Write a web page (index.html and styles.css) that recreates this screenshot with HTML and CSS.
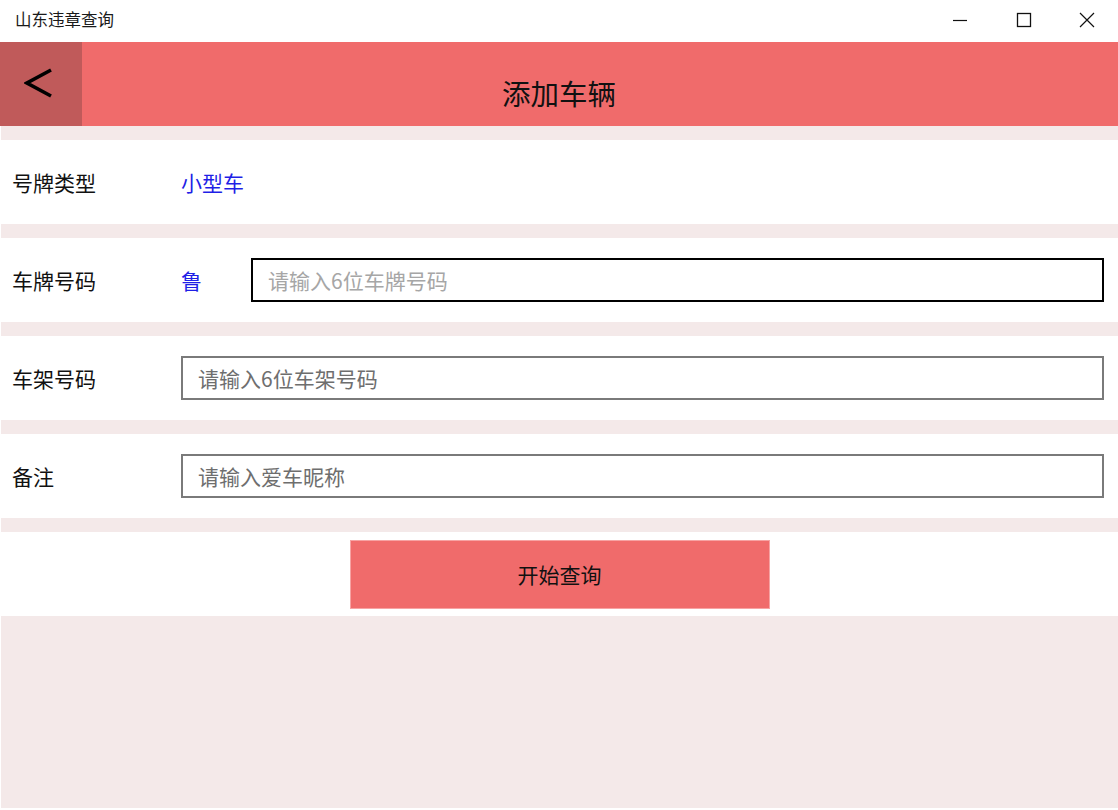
FILE: index.html
```html
<!DOCTYPE html>
<html lang="zh-CN">
<head>
<meta charset="utf-8">
<title>山东违章查询</title>
<link rel="stylesheet" href="styles.css">
</head>
<body>
<div class="window">
  <div class="titlebar">
    <span class="app-title">山东违章查询</span>
    <div class="controls">
      <span class="ctl">
        <svg width="16" height="16" viewBox="0 0 16 16"><line x1="1" y1="8.5" x2="15" y2="8.5" stroke="#111" stroke-width="1.2"/></svg>
      </span>
      <span class="ctl">
        <svg width="16" height="16" viewBox="0 0 16 16"><rect x="1.5" y="1.5" width="13" height="13" fill="none" stroke="#111" stroke-width="1.3"/></svg>
      </span>
      <span class="ctl">
        <svg width="16" height="16" viewBox="0 0 16 16"><path d="M1 1 L15 15 M15 1 L1 15" stroke="#111" stroke-width="1.2" fill="none"/></svg>
      </span>
    </div>
  </div>
  <div class="header">
    <div class="back">
      <svg width="30" height="32" viewBox="0 0 30 32"><polyline points="27,3 3,16 27,29" fill="none" stroke="#000" stroke-width="3.6"/></svg>
    </div>
    <div class="page-title">添加车辆</div>
    <div class="spacer"></div>
  </div>
  <div class="content">
    <div class="row">
      <span class="label">号牌类型</span>
      <span class="value">小型车</span>
    </div>
    <div class="row">
      <span class="label">车牌号码</span>
      <span class="value prov">鲁</span>
      <div class="input focused"><span class="ph">请输入6位车牌号码</span></div>
    </div>
    <div class="row">
      <span class="label">车架号码</span>
      <div class="input"><span class="ph">请输入6位车架号码</span></div>
    </div>
    <div class="row">
      <span class="label">备注</span>
      <div class="input"><span class="ph">请输入爱车昵称</span></div>
    </div>
    <div class="row center">
      <div class="btn">开始查询</div>
    </div>
  </div>
</div>
</body>
</html>
```

FILE: styles.css
```css
html, body {
  margin: 0;
  padding: 0;
  background: #ffffff;
  font-family: "Noto Sans CJK SC", "Noto Sans", sans-serif;
  color: #111;
}

.window {
  width: 1118px;
  height: 810px;
  display: flex;
  flex-direction: column;
  background: #ffffff;
}

.titlebar {
  height: 42px;
  display: flex;
  align-items: center;
  justify-content: space-between;
  background: #ffffff;
}

.app-title {
  font-size: 16.5px;
  line-height: 20px;
  padding-left: 15px;
  margin-top: -4px;
  color: #1a1a1a;
}

.controls {
  display: flex;
  margin-top: -3px;
}

.ctl {
  width: 64px;
  height: 30px;
  display: flex;
  align-items: center;
  justify-content: center;
}

.controls .ctl:last-child {
  width: 62px;
}

.header {
  height: 84px;
  display: grid;
  grid-template-columns: 82px 1fr 82px;
  background: #f06b6b;
}

.back {
  background: #c05a5a;
  display: flex;
  align-items: center;
  justify-content: center;
}

.back svg {
  margin-left: -5px;
  margin-top: -2px;
}

.page-title {
  display: flex;
  align-items: center;
  justify-content: center;
  font-size: 28.5px;
  line-height: 30px;
  padding-top: 18px;
  color: #111;
}

.content {
  flex: 1;
  background: #f4e9e9;
  margin: 0 0 2px 1px;
  display: flex;
  flex-direction: column;
  gap: 14px;
  padding-top: 14px;
}

.row {
  height: 84px;
  background: #ffffff;
  display: flex;
  align-items: center;
  padding: 0 14px 0 11px;
  font-size: 21px;
}

.label {
  width: 169px;
  flex: none;
  color: #111;
  line-height: 26px;
}

.value {
  color: #1f1fe6;
  line-height: 26px;
}

.prov {
  width: 70px;
  flex: none;
}

.input {
  flex: 1;
  height: 44px;
  box-sizing: border-box;
  border: 2px solid #7a7a7a;
  display: flex;
  align-items: center;
  padding-left: 15px;
  background: #fff;
}

.input.focused {
  border-color: #000;
}

.ph {
  color: #6e6e6e;
  line-height: 26px;
}

.focused .ph {
  color: #a6a6a6;
}

.row.center {
  justify-content: center;
  padding: 0;
}

.btn {
  width: 420px;
  height: 69px;
  box-sizing: border-box;
  background: #f06b6b;
  border: 1px solid #f7a3a3;
  display: flex;
  align-items: center;
  justify-content: center;
  font-size: 21px;
  color: #111;
}
```
